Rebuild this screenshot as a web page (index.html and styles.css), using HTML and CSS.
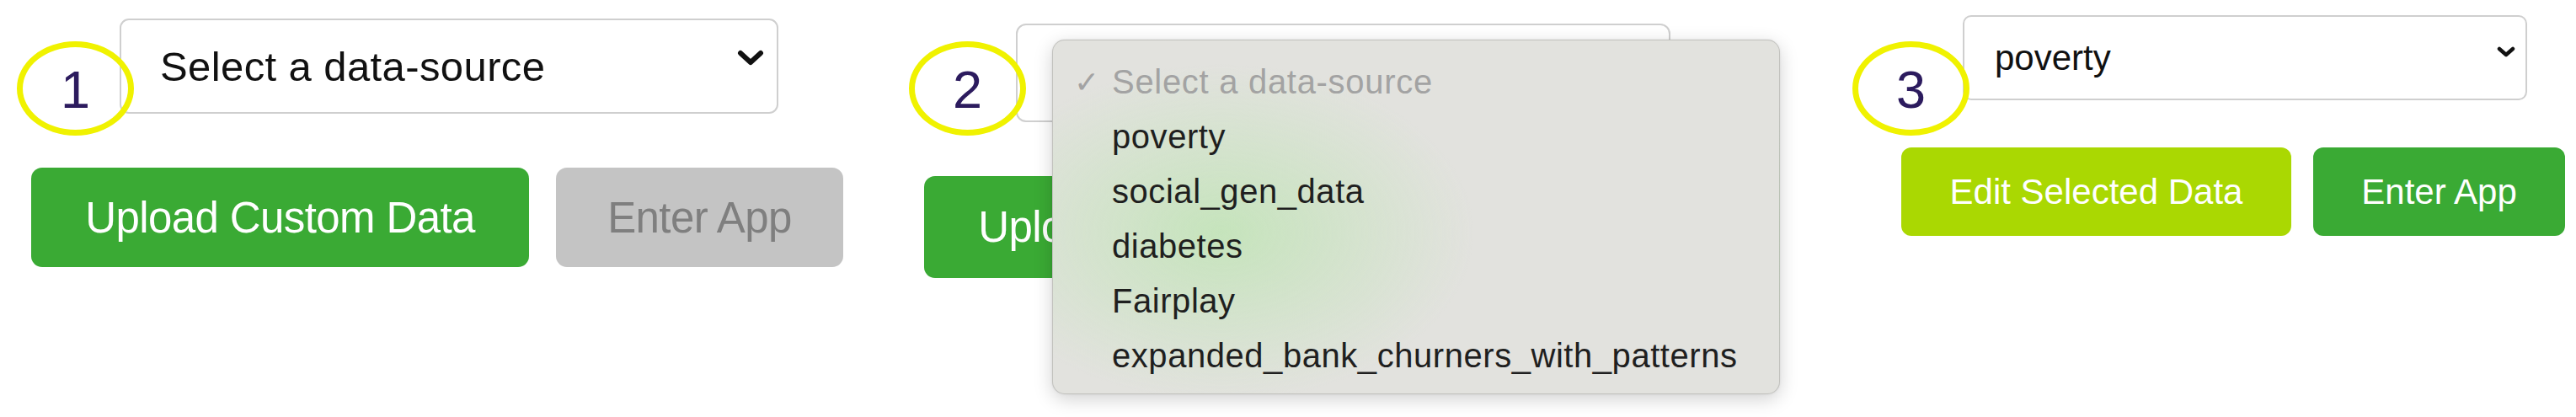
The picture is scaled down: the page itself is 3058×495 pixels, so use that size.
FILE: index.html
```html
<!DOCTYPE html>
<html>
<head>
<meta charset="utf-8">
<link rel="stylesheet" href="styles.css">
</head>
<body>
<div class="strip">
  <section class="panel p1">
    <div class="select s1">
      <span class="select-text">Select a data-source</span>
      <svg class="chev" width="32" height="20" viewBox="0 0 32 20"><polyline points="4,4 16,15 28,4" fill="none" stroke="#111" stroke-width="6" stroke-linecap="round" stroke-linejoin="round"/></svg>
    </div>
    <div class="row r1">
      <button class="btn green b-upload1">Upload Custom Data</button>
      <button class="btn grey b-enter1">Enter App</button>
    </div>
    <div class="mark m1"><span>1</span></div>
  </section>

  <section class="panel p2">
    <div class="select s2"></div>
    <div class="row r2">
      <button class="btn green b-upload2">Upload Custom Data</button>
    </div>
    <div class="mark m2"><span>2</span></div>
    <ul class="menu">
      <li class="opt disabled"><span class="check">✓</span>Select a data-source</li>
      <li class="opt">poverty</li>
      <li class="opt">social_gen_data</li>
      <li class="opt">diabetes</li>
      <li class="opt">Fairplay</li>
      <li class="opt">expanded_bank_churners_with_patterns</li>
    </ul>
  </section>

  <section class="panel p3">
    <div class="select s3">
      <span class="select-text">poverty</span>
      <svg class="chev" width="22" height="13" viewBox="0 0 22 13"><polyline points="3,3 11,10 19,3" fill="none" stroke="#111" stroke-width="4.5" stroke-linecap="round" stroke-linejoin="round"/></svg>
    </div>
    <div class="row r3">
      <button class="btn lime b-edit">Edit Selected Data</button>
      <button class="btn green b-enter3">Enter App</button>
    </div>
    <div class="mark m3"><span>3</span></div>
  </section>
</div>
</body>
</html>
```

FILE: styles.css
```css
* { box-sizing: border-box; }
html, body { margin: 0; padding: 0; background: #fff; }
body { width: 3058px; height: 495px; overflow: hidden; font-family: "Liberation Sans", Arial, sans-serif; }

.strip { display: flex; align-items: flex-start; height: 495px; }

.panel { position: relative; display: flex; flex-direction: column; align-items: flex-start; height: 495px; flex: none; }
.p1 { width: 1040px; padding-top: 22px; }
.p2 { width: 1080px; padding-top: 28px; }
.p3 { width: 938px; padding-top: 18px; }

.select {
  display: flex; align-items: center; justify-content: space-between;
  background: #fff; border: 2px solid #cfcfcf; color: #111;
}
.s1 { margin-left: 142px; width: 782px; height: 113px; border-radius: 11px; padding: 0 15px 0 46px; font-size: 49px; letter-spacing: 0.4px; }
.s2 { margin-left: 166px; width: 777px; height: 117px; border-radius: 12px; }
.s3 { margin-left: 210px; width: 670px; height: 101px; border-radius: 10px; padding: 0 12px 0 36px; font-size: 42px; }
.select-text { white-space: nowrap; }
.s3 .chev { margin-top: -14px; }
.s1 .chev { margin-top: -20px; }

.row { display: flex; }
.r1 { margin-top: 64px; margin-left: 37px; gap: 32px; }
.r2 { margin-top: 64px; margin-left: 57px; gap: 32px; }
.r3 { margin-top: 56px; margin-left: 137px; gap: 26px; }

.btn {
  border: none; margin: 0; padding: 0; color: #fff;
  font-family: "Liberation Sans", Arial, sans-serif;
  display: flex; align-items: center; justify-content: center; white-space: nowrap;
}
.green { background: #3aaa34; }
.lime { background: #aad802; }
.grey { background: #c4c4c4; color: #7f7f7f; }

.b-upload1, .b-upload2 { width: 591px; border-radius: 13px; font-size: 51px; letter-spacing: -0.6px; }
.b-enter1 { width: 341px; border-radius: 13px; font-size: 51px; letter-spacing: -0.6px; }
.b-upload1, .b-enter1 { height: 118px; }
.b-upload2 { height: 121px; }
.b-edit { width: 463px; height: 105px; border-radius: 12px; font-size: 42px; }
.b-enter3 { width: 299px; height: 105px; border-radius: 12px; font-size: 42px; }

.mark {
  position: absolute; top: 49px; width: 139px; height: 112px;
  border: 7px solid #f0f200; border-radius: 50%;
  display: flex; align-items: center; justify-content: center;
  color: #2c1b5e; font-size: 63px; line-height: 1;
}
.mark span { margin-top: 2px; }
.m1 { left: 20px; }
.m2 { left: 39px; }
.m3 { left: 79px; }

.menu {
  position: absolute; left: 209px; top: 47px; width: 864px; height: 421px;
  margin: 0; padding: 17px 0 0 0; list-style: none;
  border-radius: 15px; border: 1px solid rgba(0,0,0,0.14);
  background:
    radial-gradient(ellipse 300px 200px at 200px 228px, rgba(196,228,186,0.95), rgba(226,227,222,0) 100%),
    #e2e2de;
  box-shadow: 0 6px 22px rgba(0,0,0,0.18), 0 0 3px rgba(0,0,0,0.08);
  font-family: "Liberation Sans", Arial, sans-serif;
}
.opt { position: relative; height: 65px; line-height: 65px; padding-left: 70px; font-size: 40px; letter-spacing: 0.55px; color: #1f1f1f; white-space: nowrap; }
.opt.disabled { color: #a3a3a3; letter-spacing: 0.7px; }
.check { position: absolute; left: 25px; top: 0; font-size: 36px; color: #a3a3a3; letter-spacing: 0; }
```
